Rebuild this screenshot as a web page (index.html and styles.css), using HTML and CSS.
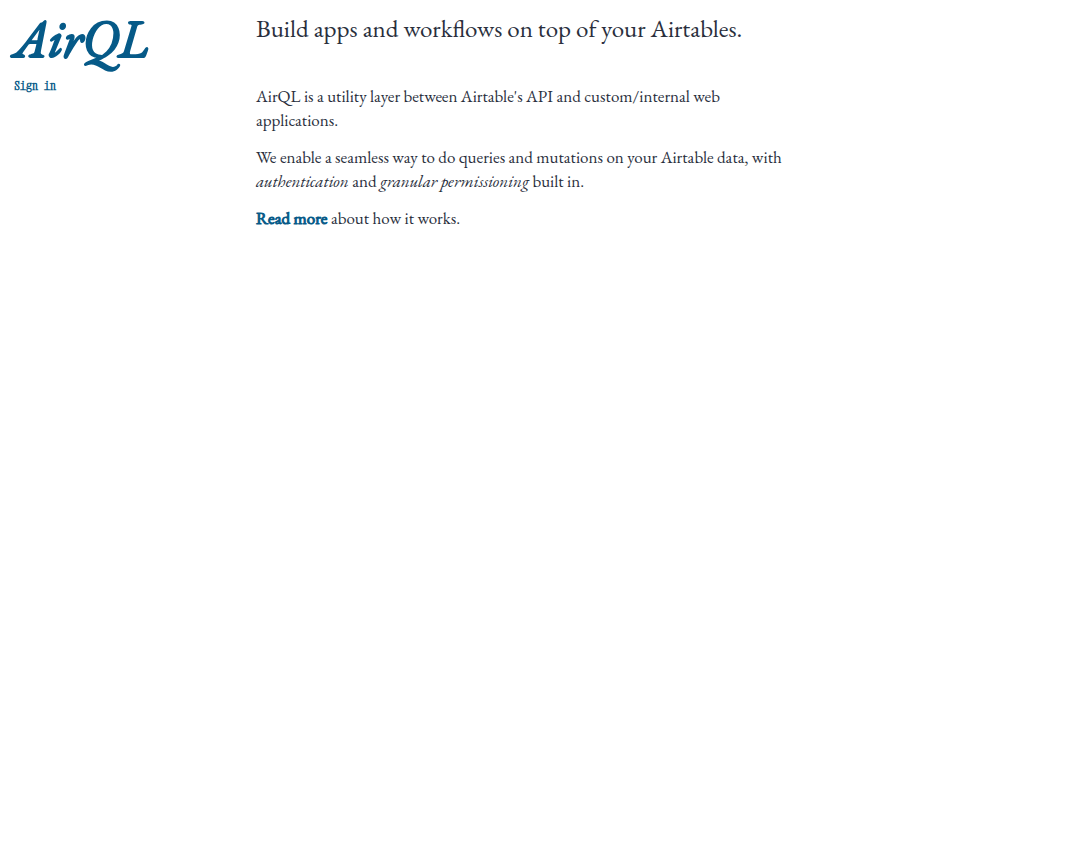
FILE: index.html
```html
<!DOCTYPE html>
<html lang="en">
<head>
    <meta charset="UTF-8">
    <meta name="viewport" content="width=device-width, initial-scale=1.0">
    <title>AirQL</title>
    <link rel="stylesheet" href="styles.css">
</head>
<body>
    <div class="layout">
        <header class="sidebar">
            <a class="logo" href="/">AirQL</a>
            <nav>
                <a class="nav-link" href="/signin">Sign in</a>
            </nav>
        </header>

        <main class="content">
            <h1>Build apps and workflows on top of your Airtables.</h1>
            <p>AirQL is a utility layer between Airtable's API and custom/internal web applications.</p>
            <p>We enable a seamless way to do queries and mutations on your Airtable data, with <em>authentication</em> and <em>granular permissioning</em> built in.</p>
            <p><a class="read-more" href="/about">Read more</a> about how it works.</p>
        </main>
    </div>
</body>
</html>
```

FILE: styles.css
```css
body {
    margin: 0;
    background-color: #fff;
    color: #2a2f3d;
    font-family: "EB Garamond", "Liberation Serif", serif;
    font-size: 17px;
    line-height: 24px;
}
a {
    color: #065a88;
    text-decoration: none;
}
.layout {
    display: flex;
}
.sidebar {
    flex: 0 0 240px;
    padding: 8px 14px;
    box-sizing: border-box;
}
.logo {
    display: block;
    font-size: 52px;
    line-height: 62px;
    font-style: italic;
    font-weight: normal;
    -webkit-text-stroke: 2px #065a88;
}
.nav-link {
    display: block;
    padding: 4px 0;
    font-family: "Xanh Mono", "Liberation Mono", monospace;
    font-size: 12px;
    font-weight: bold;
}
.content {
    flex: 0 1 560px;
    padding: 12px 16px;
    box-sizing: border-box;
}
h1 {
    margin: 0 0 40px;
    font-size: 25px;
    line-height: 32px;
    font-weight: normal;
}
p {
    margin: 0 0 13px;
}
.read-more {
    -webkit-text-stroke: 1px #065a88;
}
```
